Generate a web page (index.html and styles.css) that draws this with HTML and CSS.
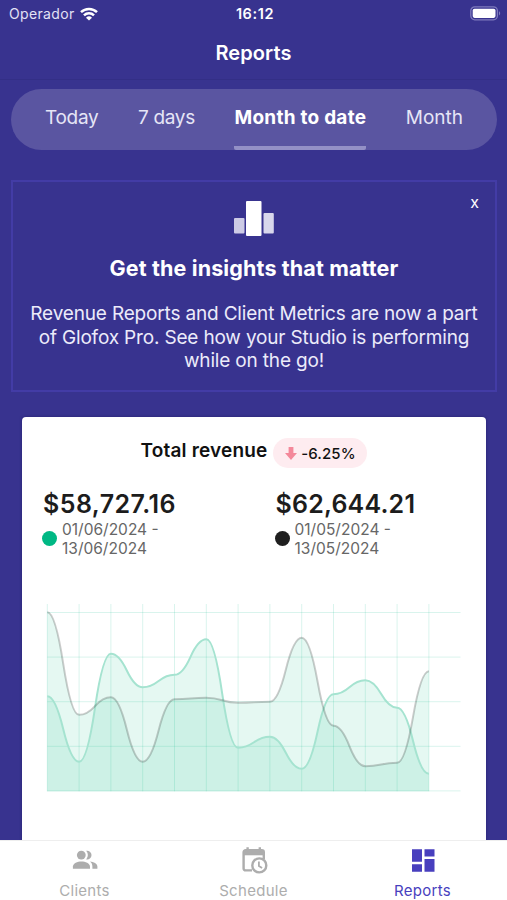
FILE: index.html
```html
<!doctype html>
<html lang="en">
  <head>
    <meta charset="UTF-8" />
    <meta name="viewport" content="width=device-width, initial-scale=1.0" />
    <title>Reports</title>
    <link rel="stylesheet" href="styles.css">
  </head>

  <body>
    <header>
      <div class="status-bar">
        <div class="carrier">
          <span class="carrier-name">Operador</span>
          <svg class="wifi" viewBox="0 0 18 14" fill="none" stroke="#fff" stroke-width="2.5">
            <path d="M1 5.2a11.4 11.4 0 0 1 16 0" />
            <path d="M4 8.4a7.1 7.1 0 0 1 10 0" />
            <path d="M9 13.6 6 10.7a4.3 4.3 0 0 1 6 0z" fill="#fff" stroke="none" />
          </svg>
        </div>
        <span class="time">16:12</span>
        <svg class="battery" viewBox="0 0 31 15">
          <rect x=".8" y=".8" width="26.6" height="13" rx="4" fill="none" stroke="#7f7bbd" stroke-width="1.3" />
          <rect x="2.7" y="2.7" width="22.8" height="9.2" rx="1.8" fill="#fff" />
          <path d="M29 5.2c1.6.6 1.6 3.6 0 4.2z" fill="#7f7bbd" />
        </svg>
      </div>
      <h1>Reports</h1>
    </header>

    <main>
      <div class="periods">
        <button class="period">Today</button>
        <button class="period">7 days</button>
        <button class="period active">Month to date</button>
        <button class="period month">Month</button>
      </div>

      <section class="banner">
        <button class="close">x</button>
        <svg class="bars" viewBox="0 0 40 36">
          <rect x="0" y="17" width="10.5" height="15.5" rx="1" fill="#cdcbe5" />
          <rect x="12" y="0" width="15.5" height="35" rx="1" fill="#fff" />
          <rect x="29.5" y="12" width="10.3" height="20.5" rx="1" fill="#d8d7ec" />
        </svg>
        <h2>Get the insights that matter</h2>
        <p>Revenue Reports and Client Metrics are now a part<br />of Glofox Pro. See how your Studio is performing<br />while on the go!</p>
      </section>

      <section class="card">
        <div class="card-title">
          <h3>Total revenue</h3>
          <div class="badge">
            <svg class="arrow" viewBox="0 0 12 13"><path d="M3.6 0h4.8v6H12L6 13 0 6h3.6z" fill="#f4889a" /></svg>
            <span>-6.25%</span>
          </div>
        </div>
        <div class="totals">
          <div class="total">
            <div class="amount current">$58,727.16</div>
            <div class="range"><i class="dot green"></i><span>01/06/2024 -<br />13/06/2024</span></div>
          </div>
          <div class="total">
            <div class="amount">$62,644.21</div>
            <div class="range"><i class="dot black"></i><span>01/05/2024 -<br />13/05/2024</span></div>
          </div>
        </div>
        <svg id="chart" class="chart" viewBox="0 0 430 200"></svg>
      </section>
    </main>

    <nav>
      <a class="tab">
        <svg viewBox="0 0 28 28" fill="#adadad">
          <circle cx="10.3" cy="9.1" r="4.4" />
          <path d="M15.2 4.8a4.4 4.4 0 1 1 0 8.6 6.4 6.4 0 0 0 0-8.6z" />
          <path d="M1.9 22.8v-2.3c0-3.2 4.6-5.1 8.5-5.1s8.6 1.9 8.6 5.1v2.3z" />
          <path d="M19 15.6c3.6.4 7.4 2.1 7.4 4.9v2.3h-5v-2.4c0-2-.9-3.6-2.4-4.8z" />
        </svg>
        <span>Clients</span>
      </a>
      <a class="tab">
        <svg viewBox="0 0 28 28" fill="none" stroke="#adadad" stroke-width="2.4">
          <path d="M12 24.4H5.6a2 2 0 0 1-2-2V6.2a2 2 0 0 1 2-2h16.2a2 2 0 0 1 2 2V13" />
          <path d="M3.6 4.5h20.2v4.8H3.6z" fill="#adadad" stroke="none" />
          <path d="M7.6 1.2v4M19.8 1.2v4" />
          <circle cx="19.3" cy="19.4" r="7" />
          <path d="M18.9 15.4v4.5l3.2 2" stroke-width="1.8" />
        </svg>
        <span>Schedule</span>
      </a>
      <a class="tab selected">
        <svg viewBox="0 0 28 28" fill="#483fbe">
          <path d="M3 3.2h10v12.6H3zM15.5 3.2h10v7.4h-10zM3 18.3h10v7.4H3zM15.5 13.1h10v12.6h-10z" />
        </svg>
        <span>Reports</span>
      </a>
    </nav>

    <script>
      const current = [95, 29.5, 137.5, 104, 116.5, 152, 43.5, 54.5, 22.5, 97, 111, 83.5, 17.5];
      const previous = [179, 76.5, 94, 29.5, 92, 93.5, 88.5, 89.5, 153.5, 65.5, 25, 28.5, 120];
      const step = 31.8;
      const left = 7.3;
      const bottom = 191.3;

      const px = (i) => left + i * step;

      function curve(data) {
        let d = `M${px(0)} ${bottom - data[0]}`;
        for (let i = 0; i < data.length - 1; i++) {
          const y1 = bottom - data[i];
          const y2 = bottom - data[i + 1];
          const midX = (px(i) + px(i + 1)) / 2;
          const midY = (y1 + y2) / 2;
          d += ` Q${(midX + px(i)) / 2} ${y1} ${midX} ${midY}`;
          d += ` Q${(midX + px(i + 1)) / 2} ${y2} ${px(i + 1)} ${y2}`;
        }
        return d;
      }

      let svg = "";
      for (let i = 0; i < 5; i++) {
        const y = 12.5 + i * 44.6;
        svg += `<path class="grid" d="M${left} ${y}H420.5" />`;
      }
      for (let i = 0; i < 13; i++) {
        svg += `<path class="grid" d="M${px(i)} 4V${bottom}" />`;
      }
      for (const data of [current, previous]) {
        svg += `<path class="area" d="${curve(data)}V${bottom}H${left}Z" />`;
      }
      svg += `<path class="line line-current" d="${curve(current)}" />`;
      svg += `<path class="line line-previous" d="${curve(previous)}" />`;
      document.getElementById("chart").innerHTML = svg;
    </script>
  </body>
</html>
```
FILE: styles.css
```css
* {
  box-sizing: border-box;
}

body {
  margin: 0;
  height: 900px;
  display: flex;
  flex-direction: column;
  overflow: hidden;
  font-family: Inter, "Liberation Sans", sans-serif;
  background-color: #38338f;
  color: #fff;
}

h1, h2, h3, p {
  margin: 0;
}

button {
  padding: 0;
  border: none;
  background: none;
  color: inherit;
  font: inherit;
}

header {
  height: 80px;
  flex: none;
  border-bottom: 1px solid #332f86;
}

.status-bar {
  height: 27px;
  padding: 0 6px 0 9px;
  display: grid;
  grid-template-columns: 1fr auto 1fr;
  align-items: center;
}

.carrier {
  display: flex;
  align-items: center;
  gap: 5px;
}

.carrier-name {
  font-size: 14px;
  letter-spacing: 0.35px;
  color: #e3e2f5;
}

.wifi {
  width: 18px;
  height: 14px;
}

.time {
  font-size: 14.5px;
  font-weight: 600;
  letter-spacing: 0.6px;
}

.battery {
  width: 31px;
  height: 15px;
  justify-self: end;
}

h1 {
  font-size: 20px;
  font-weight: 600;
  line-height: 52px;
  letter-spacing: 0.1px;
  text-align: center;
}

main {
  flex: 1;
  min-height: 0;
  overflow: hidden;
  padding: 9px 10px 0 11px;
}

.periods {
  height: 61px;
  padding: 0 34px;
  display: flex;
  justify-content: space-between;
  border-radius: 31px;
  background-color: #5a55a1;
}

.period {
  height: 61px;
  border-bottom: 4px solid transparent;
  font-size: 19px;
  letter-spacing: -0.3px;
  color: #e6e5f6;
  white-space: nowrap;
}

.period.active {
  border-radius: 0 0 2px 2px;
  border-bottom-color: #9491c6;
  font-weight: 700;
  letter-spacing: 0.25px;
  color: #fff;
}

.period.month {
  letter-spacing: 0;
}

.banner {
  position: relative;
  height: 212px;
  margin-top: 30px;
  padding-top: 19px;
  border: 2px solid #433ca6;
  text-align: center;
}

.close {
  position: absolute;
  top: 11px;
  right: 16px;
  font-size: 16px;
  line-height: 18px;
}

.bars {
  display: block;
  width: 40px;
  height: 36px;
  margin: 0 auto;
}

h2 {
  margin-top: 17px;
  font-size: 21.5px;
  line-height: 28px;
  letter-spacing: 0.13px;
  white-space: nowrap;
}

.banner p {
  margin-top: 20px;
  font-size: 19px;
  line-height: 23.5px;
  letter-spacing: -0.17px;
  color: #ecebfa;
  white-space: nowrap;
}

.card {
  height: 460px;
  margin: 25px 11px 0 11px;
  border-radius: 4px;
  background-color: #fff;
  box-shadow: 0 0 3px rgba(20, 15, 80, 0.5);
  color: #111;
}

.card-title {
  padding-top: 21px;
  display: flex;
  justify-content: center;
  gap: 6px;
}

h3 {
  font-size: 19px;
  font-weight: 600;
  line-height: 26px;
  letter-spacing: 0.17px;
}

.badge {
  width: 94px;
  height: 30px;
  display: flex;
  align-items: center;
  justify-content: center;
  gap: 4px;
  border-radius: 15px;
  background-color: #feecf0;
  font-size: 15px;
  font-weight: 500;
  letter-spacing: 0.1px;
}

.arrow {
  width: 12px;
  height: 13px;
}

.totals {
  display: grid;
  grid-template-columns: 232.5px 1fr;
  padding: 20px 0 0 21px;
}

.amount {
  font-size: 25px;
  font-weight: 600;
  line-height: 32px;
  letter-spacing: 0.2px;
  color: #1c1c1c;
}

.amount.current {
  letter-spacing: 0.45px;
}

.range {
  display: flex;
  align-items: center;
  gap: 5px;
  font-size: 15.5px;
  line-height: 19px;
  color: #666;
}

.dot {
  width: 15px;
  height: 15px;
  margin: -1px 0 0 -1px;
  border-radius: 50%;
}

.green {
  background-color: #00b884;
}

.black {
  background-color: #1f1f1f;
}

.chart {
  display: block;
  width: 430px;
  height: 200px;
  margin: 42px 0 0 18px;
}

.grid {
  stroke: #00b884;
  stroke-opacity: 0.15;
}

.area {
  fill: #00b884;
  fill-opacity: 0.1;
}

.line {
  fill: none;
  stroke-width: 2;
}

.line-current {
  stroke: #a5e3d0;
}

.line-previous {
  stroke: #000;
  stroke-opacity: 0.2;
}

nav {
  flex: none;
  height: 60px;
  display: grid;
  grid-template-columns: repeat(3, 1fr);
  border-top: 1px solid #eee;
  background-color: #fff;
}

.tab {
  padding-top: 5px;
  display: flex;
  flex-direction: column;
  align-items: center;
  font-size: 15px;
  letter-spacing: 0.3px;
  color: #adadad;
}

.tab svg {
  width: 28px;
  height: 28px;
}

.tab span {
  margin-top: 7px;
  line-height: 20px;
}

.selected {
  color: #483fbe;
}
```
